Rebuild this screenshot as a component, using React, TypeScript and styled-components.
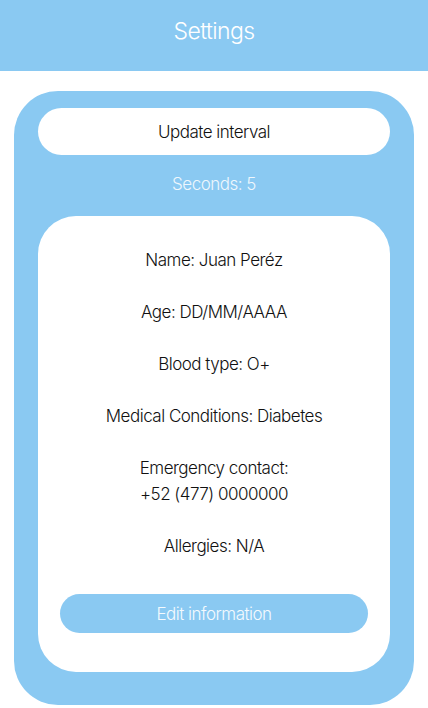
import React from "react";
import styled, { createGlobalStyle } from "styled-components";

const GlobalStyle = createGlobalStyle`
  body {
    margin: 0;
    background: #ffffff;
    font-family: Inter, "Liberation Sans", sans-serif;
    font-weight: 300;
  }
`;

const Page = styled.div`
  width: 428px;
  min-height: 708px;
  background: #ffffff;
`;

const Header = styled.header`
  height: 71px;
  background: #8ac9f2;
  display: flex;
  justify-content: center;
  align-items: center;
`;

const Title = styled.h1`
  margin: 0 0 9px;
  color: #ffffff;
  font-size: 23px;
  font-weight: 300;
  letter-spacing: -0.6px;
`;

const Main = styled.main`
  padding: 20px 14px 0;
`;

const OuterCard = styled.section`
  background: #8ac9f2;
  border-radius: 44px;
  padding: 17px 24px 33px;
  display: flex;
  flex-direction: column;
`;

const IntervalPill = styled.div`
  height: 47px;
  border-radius: 24px;
  background: #ffffff;
  display: flex;
  justify-content: center;
  align-items: center;
  color: #111111;
  font-size: 17px;
  letter-spacing: -0.5px;
`;

const Seconds = styled.div`
  margin: 19px 0 22px;
  line-height: 20px;
  text-align: center;
  color: #eef7fd;
  font-size: 17px;
  letter-spacing: -0.5px;
`;

const InfoCard = styled.div`
  background: #ffffff;
  border-radius: 38px;
  padding: 31px 22px 39px;
  display: flex;
  flex-direction: column;
  align-items: stretch;
  gap: 26px;
`;

const InfoLine = styled.p`
  margin: 0;
  line-height: 26px;
  text-align: center;
  color: #111111;
  font-size: 17px;
  letter-spacing: -0.5px;
`;

const EditButton = styled.button`
  margin-top: 9px;
  height: 39px;
  border: none;
  border-radius: 20px;
  background: #8ac9f2;
  color: #f4fafe;
  font-family: inherit;
  font-weight: 300;
  font-size: 17px;
  letter-spacing: -0.5px;
`;

const info = [
  "Name: Juan Peréz",
  "Age: DD/MM/AAAA",
  "Blood type: O+",
  "Medical Conditions: Diabetes",
];

export default function App() {
  return (
    <Page>
      <GlobalStyle />
      <Header>
        <Title>Settings</Title>
      </Header>
      <Main>
        <OuterCard>
          <IntervalPill>Update interval</IntervalPill>
          <Seconds>Seconds: 5</Seconds>
          <InfoCard>
            {info.map((line) => (
              <InfoLine key={line}>{line}</InfoLine>
            ))}
            <InfoLine>
              Emergency contact:
              <br />
              +52 (477) 0000000
            </InfoLine>
            <InfoLine>Allergies: N/A</InfoLine>
            <EditButton>Edit information</EditButton>
          </InfoCard>
        </OuterCard>
      </Main>
    </Page>
  );
}
